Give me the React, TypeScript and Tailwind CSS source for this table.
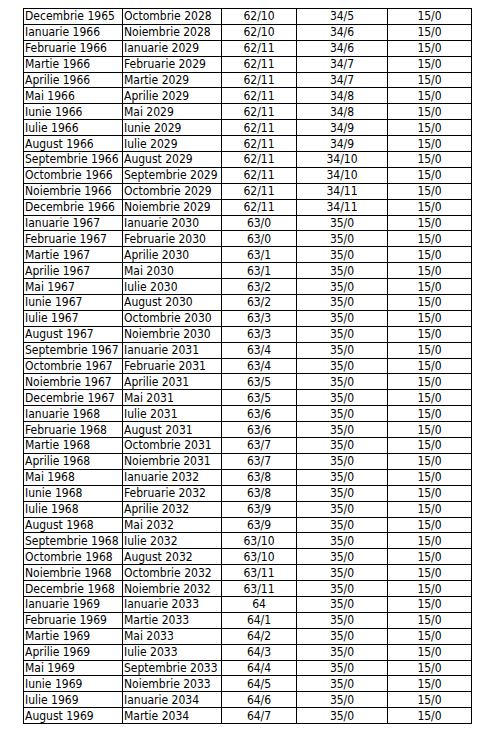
import React from "react";

const rows: [string, string, string, string, string][] = [
  ["Decembrie 1965", "Octombrie 2028", "62/10", "34/5", "15/0"],
  ["Ianuarie 1966", "Noiembrie 2028", "62/10", "34/6", "15/0"],
  ["Februarie 1966", "Ianuarie 2029", "62/11", "34/6", "15/0"],
  ["Martie 1966", "Februarie 2029", "62/11", "34/7", "15/0"],
  ["Aprilie 1966", "Martie 2029", "62/11", "34/7", "15/0"],
  ["Mai 1966", "Aprilie 2029", "62/11", "34/8", "15/0"],
  ["Iunie 1966", "Mai 2029", "62/11", "34/8", "15/0"],
  ["Iulie 1966", "Iunie 2029", "62/11", "34/9", "15/0"],
  ["August 1966", "Iulie 2029", "62/11", "34/9", "15/0"],
  ["Septembrie 1966", "August 2029", "62/11", "34/10", "15/0"],
  ["Octombrie 1966", "Septembrie 2029", "62/11", "34/10", "15/0"],
  ["Noiembrie 1966", "Octombrie 2029", "62/11", "34/11", "15/0"],
  ["Decembrie 1966", "Noiembrie 2029", "62/11", "34/11", "15/0"],
  ["Ianuarie 1967", "Ianuarie 2030", "63/0", "35/0", "15/0"],
  ["Februarie 1967", "Februarie 2030", "63/0", "35/0", "15/0"],
  ["Martie 1967", "Aprilie 2030", "63/1", "35/0", "15/0"],
  ["Aprilie 1967", "Mai 2030", "63/1", "35/0", "15/0"],
  ["Mai 1967", "Iulie 2030", "63/2", "35/0", "15/0"],
  ["Iunie 1967", "August 2030", "63/2", "35/0", "15/0"],
  ["Iulie 1967", "Octombrie 2030", "63/3", "35/0", "15/0"],
  ["August 1967", "Noiembrie 2030", "63/3", "35/0", "15/0"],
  ["Septembrie 1967", "Ianuarie 2031", "63/4", "35/0", "15/0"],
  ["Octombrie 1967", "Februarie 2031", "63/4", "35/0", "15/0"],
  ["Noiembrie 1967", "Aprilie 2031", "63/5", "35/0", "15/0"],
  ["Decembrie 1967", "Mai 2031", "63/5", "35/0", "15/0"],
  ["Ianuarie 1968", "Iulie 2031", "63/6", "35/0", "15/0"],
  ["Februarie 1968", "August 2031", "63/6", "35/0", "15/0"],
  ["Martie 1968", "Octombrie 2031", "63/7", "35/0", "15/0"],
  ["Aprilie 1968", "Noiembrie 2031", "63/7", "35/0", "15/0"],
  ["Mai 1968", "Ianuarie 2032", "63/8", "35/0", "15/0"],
  ["Iunie 1968", "Februarie 2032", "63/8", "35/0", "15/0"],
  ["Iulie 1968", "Aprilie 2032", "63/9", "35/0", "15/0"],
  ["August 1968", "Mai 2032", "63/9", "35/0", "15/0"],
  ["Septembrie 1968", "Iulie 2032", "63/10", "35/0", "15/0"],
  ["Octombrie 1968", "August 2032", "63/10", "35/0", "15/0"],
  ["Noiembrie 1968", "Octombrie 2032", "63/11", "35/0", "15/0"],
  ["Decembrie 1968", "Noiembrie 2032", "63/11", "35/0", "15/0"],
  ["Ianuarie 1969", "Ianuarie 2033", "64", "35/0", "15/0"],
  ["Februarie 1969", "Martie 2033", "64/1", "35/0", "15/0"],
  ["Martie 1969", "Mai 2033", "64/2", "35/0", "15/0"],
  ["Aprilie 1969", "Iulie 2033", "64/3", "35/0", "15/0"],
  ["Mai 1969", "Septembrie 2033", "64/4", "35/0", "15/0"],
  ["Iunie 1969", "Noiembrie 2033", "64/5", "35/0", "15/0"],
  ["Iulie 1969", "Ianuarie 2034", "64/6", "35/0", "15/0"],
  ["August 1969", "Martie 2034", "64/7", "35/0", "15/0"],
];

export default function App() {
  return (
    <div className="bg-white min-h-[739px] pt-[8px] pl-[23px]">
      <table
        className="border-collapse text-[12px] leading-[14px] text-black"
        style={{ fontFamily: '"DejaVu Sans Condensed", "DejaVu Sans", sans-serif' }}
      >
        <tbody>
          {rows.map((r, i) => (
            <tr key={i} className="h-[15.9px]">
              <td className="w-[99px] border border-black px-[1px] py-0 whitespace-nowrap">{r[0]}</td>
              <td className="w-[99px] border border-black px-[1px] py-0 whitespace-nowrap">{r[1]}</td>
              <td className="w-[75px] border border-black p-0 text-center">{r[2]}</td>
              <td className="w-[91px] border border-black p-0 text-center">{r[3]}</td>
              <td className="w-[84px] border border-black p-0 text-center">{r[4]}</td>
            </tr>
          ))}
        </tbody>
      </table>
    </div>
  );
}
